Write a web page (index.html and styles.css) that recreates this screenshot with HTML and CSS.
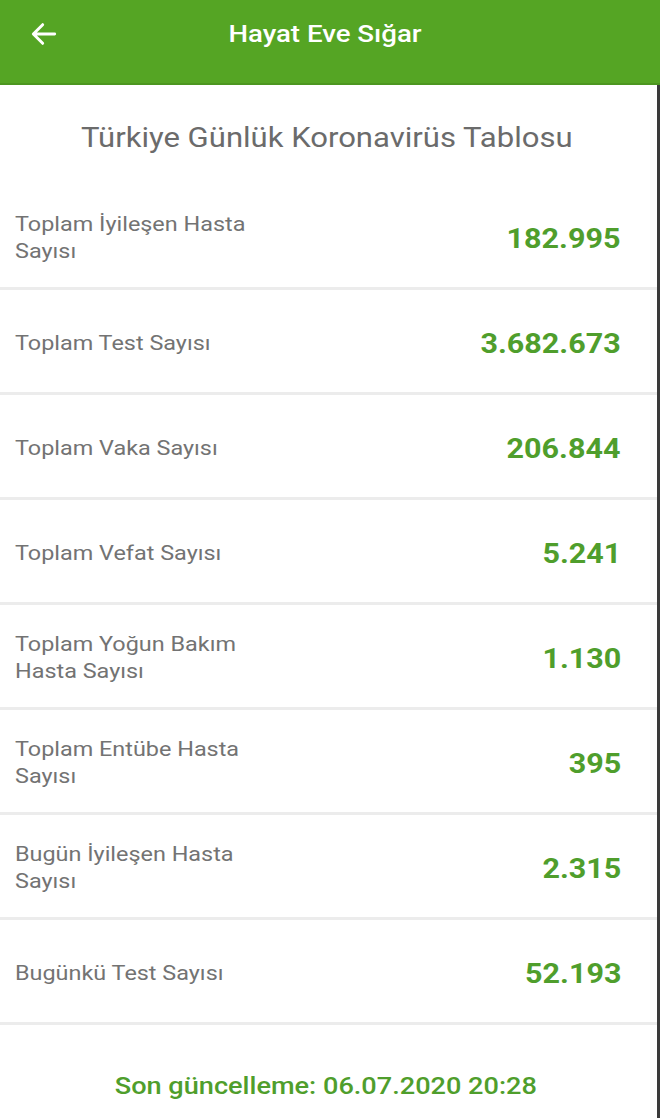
FILE: index.html
```html
<!DOCTYPE html>
<html lang="tr">
<head>
  <meta charset="UTF-8" />
  <meta name="viewport" content="width=device-width, initial-scale=1.0" />
  <title>Hayat Eve Sığar</title>
  <link rel="stylesheet" href="styles.css">
</head>
<body>
  <header class="topBar">
    <svg class="backIcon" viewBox="0 0 24 24" width="32" height="32">
      <path d="M20 12H5M11 5l-7 7 7 7" fill="none" stroke="#fff" stroke-width="2.2" stroke-linecap="round" stroke-linejoin="round"/>
    </svg>
    <h1><span>Hayat Eve Sığar</span></h1>
  </header>

  <main class="page">
    <h2 class="tableTitle"><span>Türkiye Günlük Koronavirüs Tablosu</span></h2>

    <div class="statList">
      <div class="statRow">
        <span class="label">Toplam İyileşen Hasta<br>Sayısı</span>
        <span class="value">182.995</span>
      </div>
      <div class="statRow">
        <span class="label">Toplam Test Sayısı</span>
        <span class="value">3.682.673</span>
      </div>
      <div class="statRow">
        <span class="label">Toplam Vaka Sayısı</span>
        <span class="value">206.844</span>
      </div>
      <div class="statRow">
        <span class="label">Toplam Vefat Sayısı</span>
        <span class="value">5.241</span>
      </div>
      <div class="statRow">
        <span class="label">Toplam Yoğun Bakım<br>Hasta Sayısı</span>
        <span class="value">1.130</span>
      </div>
      <div class="statRow">
        <span class="label">Toplam Entübe Hasta<br>Sayısı</span>
        <span class="value">395</span>
      </div>
      <div class="statRow">
        <span class="label">Bugün İyileşen Hasta<br>Sayısı</span>
        <span class="value">2.315</span>
      </div>
      <div class="statRow">
        <span class="label">Bugünkü Test Sayısı</span>
        <span class="value">52.193</span>
      </div>
    </div>

    <p class="updated"><span>Son güncelleme: 06.07.2020 20:28</span></p>
  </main>
</body>
</html>
```

FILE: styles.css
```css
* {
  box-sizing: border-box;
  margin: 0;
  padding: 0;
}

body {
  font-family: Roboto, "Liberation Sans", Arial, sans-serif;
  background: #fff;
  color: #707070;
  width: 660px;
  height: 1118px;
  overflow: hidden;
}

/* the screenshot is a bit stretched sideways, so text gets a scaleX */
.topBar h1 span,
.tableTitle span,
.updated span,
.label,
.value {
  display: inline-block;
}

.topBar {
  height: 85px;
  background-color: #55a524;
  border-bottom: 2px solid #4c9620;
  display: flex;
  align-items: center;
  padding: 0 0 16px 28px;
}

.backIcon {
  flex-shrink: 0;
}

.topBar h1 {
  flex: 1;
  text-align: center;
  color: #fff;
  font-size: 24px;
  font-weight: 500;
  padding-right: 70px;
}

.topBar h1 span {
  transform: scaleX(1.15);
}

.page {
  border-right: 3px solid #3a3a3a;
  min-height: calc(1118px - 85px);
}

.tableTitle {
  text-align: center;
  font-size: 27px;
  font-weight: 400;
  color: #6b6b6b;
  padding: 37px 4px 0 0;
  height: 100px;
}

.tableTitle span {
  transform: scaleX(1.15);
}

.statList {
  display: flex;
  flex-direction: column;
}

.statRow {
  display: flex;
  justify-content: space-between;
  align-items: center;
  height: 105px;
  padding: 4px 36px 0 15px;
  border-bottom: 3px solid #ececec;
}

.label {
  font-size: 20px;
  line-height: 27px;
  color: #737373;
  transform: scaleX(1.17);
  transform-origin: left center;
}

.value {
  font-size: 28px;
  font-weight: 700;
  color: #4f9e2c;
  transform: scaleX(1.09);
  transform-origin: right center;
}

.updated {
  text-align: center;
  font-size: 24px;
  font-weight: 500;
  color: #4f9e2c;
  padding: 47px 6px 0 0;
}

.updated span {
  transform: scaleX(1.13);
}
```
